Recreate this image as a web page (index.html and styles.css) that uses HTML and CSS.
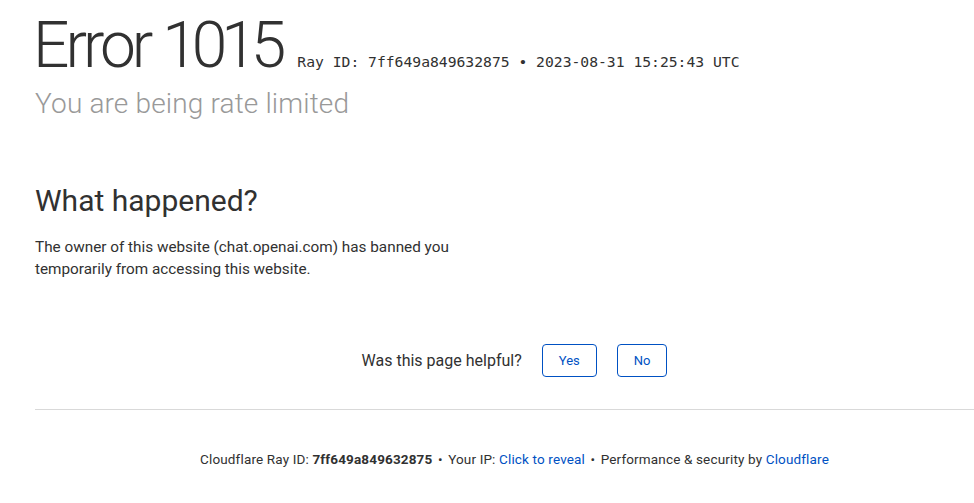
FILE: index.html
```html
<!DOCTYPE html>
<html lang="en">
<head>
<meta charset="utf-8">
<title>Access denied | chat.openai.com used Cloudflare to restrict access</title>
<link rel="stylesheet" href="styles.css">
</head>
<body>
<div class="wrapper">
  <section class="header">
    <h1 class="title-row">
      <span class="error-type">Error</span>
      <span class="error-code">1015</span>
      <small class="ray-meta">Ray ID: 7ff649a849632875 <span class="dot">&bull;</span> 2023-08-31 15:25:43 UTC</small>
    </h1>
    <h2 class="subtitle">You are being rate limited</h2>
  </section>

  <section class="content">
    <h2 class="section-title">What happened?</h2>
    <p class="section-text">The owner of this website (chat.openai.com) has banned you temporarily from accessing this website.</p>
  </section>

  <div class="feedback">
    <span class="feedback-q">Was this page helpful?</span>
    <button class="fb-btn yes">Yes</button>
    <button class="fb-btn no">No</button>
  </div>

  <div class="footer">
    <p class="footer-text">
      <span>Cloudflare Ray ID: <strong>7ff649a849632875</strong></span>
      <span class="sep">&bull;</span>
      <span>Your IP: <a class="link" href="#">Click to reveal</a></span>
      <span class="sep">&bull;</span>
      <span>Performance &amp; security by <a class="link" href="#">Cloudflare</a></span>
    </p>
  </div>
</div>
</body>
</html>
```

FILE: styles.css
```css
html, body {
  margin: 0;
  padding: 0;
  background: #fff;
  overflow-x: hidden;
}
body {
  font-family: Roboto, "Helvetica Neue", Arial, sans-serif;
  color: #313131;
}
.wrapper {
  margin-left: 35px;
  width: 959px;
}
.header {
  padding-top: 16px;
}
.title-row {
  margin: 0;
  font-weight: 300;
  font-size: 64px;
  line-height: 60px;
  letter-spacing: -4px;
  color: #313131;
  display: flex;
  align-items: baseline;
  white-space: nowrap;
}
.error-type {
  margin-left: -2px;
}
.error-code {
  margin-left: 13px;
  letter-spacing: -6px;
}
.ray-meta {
  font-family: "DejaVu Sans Mono", "Liberation Mono", monospace;
  font-size: 14.7px;
  font-weight: 400;
  letter-spacing: 0;
  margin-left: 17px;
  color: #313131;
}
.subtitle {
  margin: -6px 0 0;
  font-size: 28px;
  font-weight: 300;
  letter-spacing: 0.15px;
  line-height: 36px;
  color: #999;
}
.content {
  margin-top: 61px;
}
.section-title {
  margin: 0;
  font-size: 30px;
  font-weight: 400;
  line-height: 36px;
  color: #313131;
}
.section-text {
  margin: 17px 0 0;
  width: 450px;
  font-size: 15.3px;
  line-height: 22px;
  color: #313131;
}
.feedback {
  margin-top: 64px;
  display: flex;
  justify-content: center;
  align-items: center;
  gap: 20px;
  padding-bottom: 32px;
  border-bottom: 1px solid #d9d9d9;
}
.feedback-q {
  font-size: 16px;
}
.fb-btn {
  height: 33px;
  padding: 0 16px;
  background: #fff;
  border: 1px solid #0051c3;
  border-radius: 4px;
  color: #0051c3;
  font-family: inherit;
  font-size: 13px;
}
.footer {
  padding-top: 39px;
}
.footer-text {
  margin: 0;
  text-align: center;
  font-size: 13.5px;
  letter-spacing: 0.15px;
  line-height: 20px;
  color: #313131;
}
.footer-text strong {
  font-weight: 700;
}
.sep {
  margin: 0 2px;
}
.link {
  color: #0051c3;
  text-decoration: none;
}
```
